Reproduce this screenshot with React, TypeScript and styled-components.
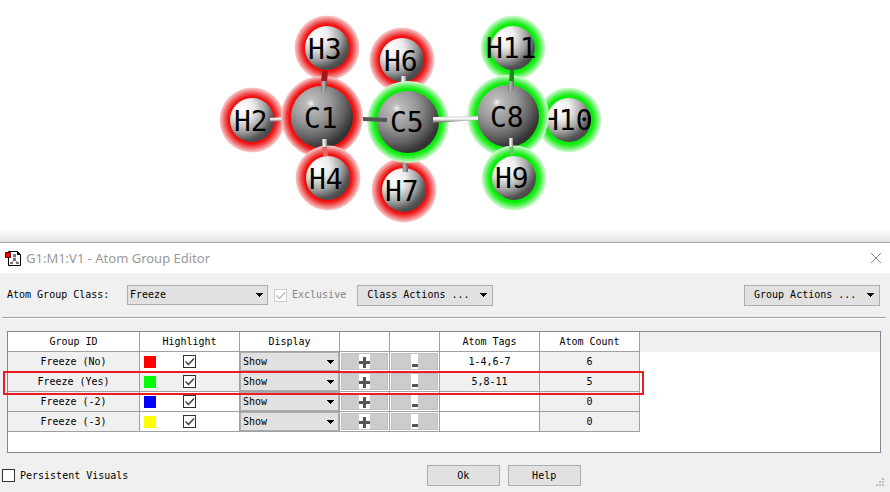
import React from "react";
import styled, { createGlobalStyle } from "styled-components";

const GlobalStyle = createGlobalStyle`
  *, *::after { box-sizing: border-box; }
  body { margin: 0; background: #fff; }
  button, input, select { font: inherit; color: inherit; margin: 0; border-radius: 0; }
`;

const Page = styled.div`
  display: flex;
  flex-direction: column;
  min-height: 100vh;
  font: 10px/14px "DejaVu Sans Mono", "Liberation Mono", monospace;
  color: #000;
`;

const Viewport = styled.main`
  display: flex;
  background: linear-gradient(to top, #e4e4e4, #fff 14px);
`;

const Molecule = styled.svg`
  display: block;
  width: 100%;
  height: 242px;
  font: 28px "DejaVu Sans Mono", monospace;
`;

const Dialog = styled.section`
  flex: 1;
  display: flex;
  flex-direction: column;
  border-top: 1px solid #a6a6a6;
  background: #f0f0f0;
`;

const TitleBar = styled.header`
  display: flex;
  align-items: center;
  gap: 5px;
  height: 30px;
  padding: 0 8px 0 5px;
  background: #fff;
`;

const Title = styled.h1`
  flex: 1;
  margin: 0;
  font: 13px/18px "Noto Sans", sans-serif;
  color: #999;
`;

const CloseButton = styled.button`
  display: flex;
  padding: 0;
  border: 0;
  background: none;
`;

const Toolbar = styled.div`
  display: flex;
  align-items: center;
  height: 44px;
  padding: 0 10px 0 7px;
  gap: 6px;
`;

const ClassLabel = styled.label`
  width: 114px;
`;

const SelectBox = styled.div<{ $wide?: boolean }>`
  position: relative;
  display: flex;
  width: ${(p) => (p.$wide ? "141px" : "100%")};
  height: ${(p) => (p.$wide ? "20px" : "19px")};
`;

const Select = styled.select`
  appearance: none;
  width: 100%;
  padding: 0 2px;
  border: 1px solid #adadad;
  background: #e1e1e1;
`;

const SelectArrow = styled.span`
  position: absolute;
  right: 5px;
  top: 0;
  bottom: 0;
  display: flex;
  align-items: center;
  pointer-events: none;
`;

const CheckLabel = styled.label<{ $muted?: boolean }>`
  display: flex;
  align-items: center;
  gap: 5px;
  color: ${(p) => (p.$muted ? "#838383" : "#000")};
`;

const CheckFrame = styled.span`
  display: inline-grid;
  width: 13px;
  height: 13px;
  > * { grid-area: 1 / 1; }
  svg { pointer-events: none; }
`;

const CheckInput = styled.input`
  appearance: none;
  width: 13px;
  height: 13px;
  border: 1px solid #333;
  background: #fff;
  &:disabled { border-color: #ccc; }
`;

const MenuButton = styled.button<{ $end?: boolean }>`
  display: flex;
  align-items: center;
  justify-content: space-between;
  width: 136px;
  height: 21px;
  margin-left: ${(p) => (p.$end ? "auto" : "5px")};
  padding: 0 5px 0 9px;
  border: 1px solid #adadad;
  background: #e1e1e1;
`;

const Divider = styled.hr`
  width: calc(100% - 6px);
  height: 2px;
  margin: 0 0 0 2px;
  border: 0;
  border-top: 1px solid #a0a0a0;
  background: #fff;
`;

const TablePanel = styled.div`
  flex: 1;
  margin: 12px 9px 0 7px;
  border: 1px solid #828790;
  background: linear-gradient(to bottom, #f0f0f0 20px, #fff 20px);
`;

const GroupTable = styled.table`
  width: 632px;
  table-layout: fixed;
  border-collapse: separate;
  border-spacing: 0;
`;

const Col = styled.col<{ $w: number }>`
  width: ${(p) => p.$w}px;
`;

const Cell = styled.td<{ $gray?: boolean }>`
  height: 20px;
  padding: 0;
  border-right: 1px solid #a0a0a0;
  border-bottom: 1px solid #a0a0a0;
  background: ${(p) => (p.$gray ? "#f0f0f0" : "#fff")};
  text-align: center;
`;

const HeadCell = styled(Cell).attrs({ as: "th" })`
  font-weight: normal;
`;

const Row = styled.tr<{ $marked?: boolean }>`
  position: relative;
  ${(p) =>
    p.$marked &&
    `td:first-child::after {
      content: "";
      position: absolute;
      z-index: 1;
      top: -1px;
      left: -5px;
      width: 641px;
      height: 24px;
      border: 2px solid #ed1c24;
      pointer-events: none;
    }`}
`;

const HighlightLine = styled.div`
  display: flex;
  align-items: center;
  gap: 27px;
  padding-left: 4px;
`;

const Swatch = styled.span<{ $color: string }>`
  width: 12px;
  height: 12px;
  background: ${(p) => p.$color};
`;

const StepButton = styled.button`
  display: flex;
  align-items: center;
  justify-content: center;
  width: calc(100% - 2px);
  height: 17px;
  margin: 0 1px;
  padding: 0;
  border: 1px solid #bfbfbf;
  background: #ccc;
`;

const Footer = styled.footer`
  display: grid;
  grid-template-columns: 7fr auto 5fr;
  align-items: center;
  height: 39px;
  padding: 6px 6px 0 2px;
`;

const DialogButtons = styled.div`
  display: flex;
  gap: 8px;
`;

const PushButton = styled.button`
  width: 73px;
  height: 21px;
  padding: 0;
  border: 1px solid #adadad;
  background: #e1e1e1;
`;

const Grip = styled.svg`
  justify-self: end;
  align-self: end;
  margin-bottom: 6px;
`;

const Arrow = () => (
  <svg width="7" height="4" viewBox="0 0 7 4" shapeRendering="crispEdges">
    <path d="M0 0h7v1H6v1H5v1H4v1H3V3H2V2H1V1H0z" />
  </svg>
);

type CheckProps = { name: string; checked?: boolean; disabled?: boolean };

const Check = ({ name, checked, disabled }: CheckProps) => (
  <CheckFrame>
    <CheckInput type="checkbox" aria-label={name} defaultChecked={checked} disabled={disabled} />
    {checked && (
      <svg width="13" height="13" viewBox="0 0 13 13">
        <path d="M2.5 6.5l3 3 5.5-6" fill="none" stroke={disabled ? "#bbb" : "#333"} strokeWidth="1.3" />
      </svg>
    )}
  </CheckFrame>
);

type Glow = "red" | "green";
type AtomData = { name: string; x: number; y: number; glow: Glow; tx: number; ty: number };

const Atom = ({ name, x, y, glow, tx, ty }: AtomData) => {
  const carbon = name[0] === "C";
  return (
    <g>
      <circle cx={x} cy={y} r={carbon ? 41 : 32.5} fill={`url(#${glow}${carbon ? "C" : "H"})`} />
      <circle cx={x} cy={y} r={carbon ? 31 : 22} fill={carbon ? "url(#carbon)" : "url(#hydrogen)"} />
      <text x={tx} y={ty}>{name}</text>
    </g>
  );
};

const backAtoms: AtomData[] = [
  { name: "H2", x: 252, y: 120, glow: "red", tx: 234, ty: 131 },
  { name: "H10", x: 569, y: 120, glow: "green", tx: 542, ty: 130 },
  { name: "H6", x: 402, y: 60, glow: "red", tx: 384, ty: 71 },
  { name: "H7", x: 404, y: 190, glow: "red", tx: 385, ty: 201 },
  { name: "H3", x: 327, y: 48, glow: "red", tx: 308, ty: 59 },
  { name: "H11", x: 513, y: 48, glow: "green", tx: 486, ty: 58 },
];

const carbons: AtomData[] = [
  { name: "C1", x: 322, y: 117, glow: "red", tx: 304, ty: 128 },
  { name: "C5", x: 408, y: 122, glow: "green", tx: 390, ty: 132 },
  { name: "C8", x: 508, y: 116, glow: "green", tx: 490, ty: 127 },
];

const frontAtoms: AtomData[] = [
  { name: "H4", x: 328, y: 178, glow: "red", tx: 309, ty: 189 },
  { name: "H9", x: 514, y: 178, glow: "green", tx: 495, ty: 188 },
];

const shades = {
  red: ["#f01010", "#f04848", "#f39090", "#f8d0d0"],
  green: ["#08ee08", "#48f048", "#98f498", "#dcfadc"],
};

const glows = [
  { id: "redH", colors: shades.red, stops: [0.72, 0.81, 0.91, 1] },
  { id: "redC", colors: shades.red, stops: [0.8, 0.87, 0.94, 1] },
  { id: "greenH", colors: shades.green, stops: [0.74, 0.83, 0.92, 1] },
  { id: "greenC", colors: shades.green, stops: [0.8, 0.87, 0.94, 1] },
];

const MoleculeView = () => (
  <Molecule viewBox="0 0 890 242" role="img" aria-label="Propane molecule with highlighted atoms">
    <defs>
      {glows.map((g) => (
        <radialGradient key={g.id} id={g.id}>
          {g.stops.map((s, i) => <stop key={s} offset={s} stopColor={g.colors[i]} />)}
        </radialGradient>
      ))}
      <radialGradient id="hydrogen" cx="0.28" cy="0.24" r="0.86">
        <stop offset="0" stopColor="#fff" />
        <stop offset="0.3" stopColor="#ececec" />
        <stop offset="0.62" stopColor="#a0a0a0" />
        <stop offset="0.84" stopColor="#545454" />
        <stop offset="1" stopColor="#444" />
      </radialGradient>
      <radialGradient id="carbon" cx="0.32" cy="0.28" r="0.84">
        <stop offset="0" stopColor="#f4f4f4" />
        <stop offset="0.08" stopColor="#bcbcbc" />
        <stop offset="0.38" stopColor="#989898" />
        <stop offset="0.65" stopColor="#646464" />
        <stop offset="0.86" stopColor="#343434" />
        <stop offset="1" stopColor="#303030" />
      </radialGradient>
      <linearGradient id="tubeX">
        <stop offset="0" stopColor="#888" />
        <stop offset="0.35" stopColor="#fff" />
        <stop offset="1" stopColor="#888" />
      </linearGradient>
      <linearGradient id="tubeDark">
        <stop offset="0" stopColor="#777" />
        <stop offset="0.4" stopColor="#b4b4b4" />
        <stop offset="1" stopColor="#606060" />
      </linearGradient>
      <linearGradient id="tubeY" x2="0" y2="1">
        <stop offset="0" stopColor="#ccc" />
        <stop offset="0.4" stopColor="#fff" />
        <stop offset="1" stopColor="#555" />
      </linearGradient>
    </defs>
    {backAtoms.map((a) => <Atom key={a.name} {...a} />)}
    <path d="M270 118l12-1v4l-12 1z" fill="url(#tubeY)" />
    <path d="M401 76h5v8h-5z" fill="url(#tubeX)" />
    {carbons.map((a) => <Atom key={a.name} {...a} />)}
    <path d="M322 71h6l-1 11h-6z" fill="#a81818" />
    <path d="M321 81h6l-1 11h-5z" fill="url(#tubeDark)" />
    <path d="M510 70h4v12h-5z" fill="#168c16" />
    <path d="M509 81h5l-1 10h-5z" fill="url(#tubeDark)" />
    <path d="M363 117l24 1v4l-24-1z" fill="#555" />
    <path d="M433 117l45-1v4l-45 3z" fill="url(#tubeY)" />
    <path d="M402 163h6v9h-5z" fill="url(#tubeDark)" />
    {frontAtoms.map((a) => <Atom key={a.name} {...a} />)}
    <path d="M322 139h5v9h-5z" fill="url(#tubeX)" />
    <path d="M322 147h5l1 9h-5z" fill="#e46464" />
    <path d="M509 138h4v10h-4z" fill="url(#tubeX)" />
    <path d="M509 147h5v8h-4z" fill="#64cc64" />
  </Molecule>
);

const groups = [
  { id: "Freeze (No)", color: "#ff0000", tags: "1-4,6-7", count: 6 },
  { id: "Freeze (Yes)", color: "#00ff00", tags: "5,8-11", count: 5, marked: true },
  { id: "Freeze (-2)", color: "#0000ff", tags: "", count: 0 },
  { id: "Freeze (-3)", color: "#ffff00", tags: "", count: 0 },
];

const columns = [
  { title: "Group ID", width: 132 },
  { title: "Highlight", width: 100 },
  { title: "Display", width: 100 },
  { title: "", width: 50 },
  { title: "", width: 50 },
  { title: "Atom Tags", width: 100 },
  { title: "Atom Count", width: 100 },
];

const StepIcon = ({ plus }: { plus?: boolean }) => (
  <svg width="11" height="15" viewBox="0 0 11 15">
    {plus ? (
      <>
        <path d="M0 0h11v15H0z" fill="#fff" />
        <path d="M0 7h11v3H0zM4 3h3v11H4z" fill="#555" />
      </>
    ) : (
      <>
        <path d="M2 0h7v15H2z" fill="#fff" />
        <path d="M3 10h6v3H3z" fill="#555" />
      </>
    )}
  </svg>
);

export default function App() {
  return (
    <Page>
      <GlobalStyle />
      <Viewport>
        <MoleculeView />
      </Viewport>
      <Dialog>
        <TitleBar>
          <svg width="16" height="17" viewBox="0 0 16 17">
            <path d="M3.5 1.5h9l3 3v11h-12z" fill="#fff" stroke="#000" />
            <path d="M12 1v4h4z" />
            <path d="M9.5 5v5M9.5 9l-3 4M9.5 9l3 4" stroke="#888" fill="none" />
            <path d="M8 4h3v3H8zM5 12h3v2H5zM11 12h3v2h-3zM8 8h3v3H8z" fill="#777" />
            <path d="M.5 2.5h5v5h-5z" fill="#f00" stroke="#600" />
          </svg>
          <Title>G1:M1:V1 - Atom Group Editor</Title>
          <CloseButton aria-label="Close">
            <svg width="12" height="12" viewBox="0 0 12 12">
              <path d="M1 1l10 10M11 1L1 11" stroke="#8c8c8c" />
            </svg>
          </CloseButton>
        </TitleBar>
        <Toolbar>
          <ClassLabel htmlFor="group-class">Atom Group Class:</ClassLabel>
          <SelectBox $wide>
            <Select id="group-class"><option>Freeze</option></Select>
            <SelectArrow><Arrow /></SelectArrow>
          </SelectBox>
          <CheckLabel $muted>
            <Check name="Exclusive" checked disabled />
            Exclusive
          </CheckLabel>
          <MenuButton>Class Actions ...<Arrow /></MenuButton>
          <MenuButton $end>Group Actions ...<Arrow /></MenuButton>
        </Toolbar>
        <Divider />
        <TablePanel>
          <GroupTable>
            <colgroup>
              {columns.map((c, i) => <Col key={i} $w={c.width} />)}
            </colgroup>
            <thead>
              <Row>{columns.map((c, i) => <HeadCell key={i}>{c.title}</HeadCell>)}</Row>
            </thead>
            <tbody>
              {groups.map((g) => (
                <Row key={g.id} $marked={g.marked}>
                  <Cell $gray>{g.id}</Cell>
                  <Cell $gray={g.marked}>
                    <HighlightLine>
                      <Swatch $color={g.color} />
                      <Check name={`Highlight ${g.id}`} checked />
                    </HighlightLine>
                  </Cell>
                  <Cell>
                    <SelectBox>
                      <Select aria-label={`Display ${g.id}`}><option>Show</option></Select>
                      <SelectArrow><Arrow /></SelectArrow>
                    </SelectBox>
                  </Cell>
                  <Cell><StepButton aria-label={`Add atoms to ${g.id}`}><StepIcon plus /></StepButton></Cell>
                  <Cell><StepButton aria-label={`Remove atoms from ${g.id}`}><StepIcon /></StepButton></Cell>
                  <Cell $gray={g.marked}>{g.tags}</Cell>
                  <Cell $gray>{g.count}</Cell>
                </Row>
              ))}
            </tbody>
          </GroupTable>
        </TablePanel>
        <Footer>
          <CheckLabel>
            <Check name="Persistent Visuals" />
            Persistent Visuals
          </CheckLabel>
          <DialogButtons>
            <PushButton>Ok</PushButton>
            <PushButton>Help</PushButton>
          </DialogButtons>
          <Grip width="8" height="8" viewBox="0 0 8 8" aria-hidden="true">
            <path d="M6 0h2v2H6zM3 3h2v2H3zM6 3h2v2H6zM0 6h2v2H0zM3 6h2v2H3zM6 6h2v2H6z" fill="#bbb" />
          </Grip>
        </Footer>
      </Dialog>
    </Page>
  );
}
